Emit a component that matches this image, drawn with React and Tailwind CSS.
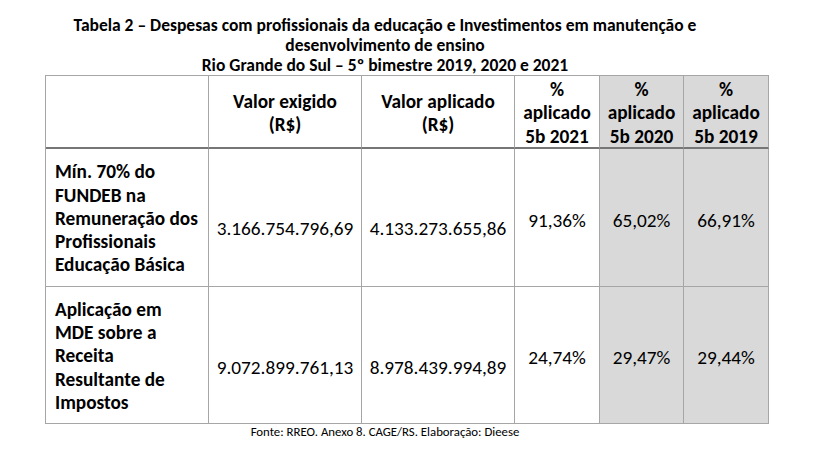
import React from "react";

const G = "bg-[#d9d9d9]";

function HeadCell({ children, gray }) {
  return (
    <div className={`flex items-center justify-center pt-[3px] text-center border-r border-b-2 border-r-[#a6a6a6] border-b-[#767676] font-bold ${gray ? G : ""}`}>
      <div>{children}</div>
    </div>
  );
}

function LabelCell({ lines }) {
  return (
    <div className="flex items-center pl-[9px] pt-[2px] border-r border-b border-[#a6a6a6] font-bold">
      <div>
        {lines.map((l) => (
          <div key={l} className="whitespace-nowrap">{l}</div>
        ))}
      </div>
    </div>
  );
}

function ValueCell({ children, low }) {
  return (
    <div className={`flex items-center justify-center border-r border-b border-[#a6a6a6] ${low ? "pt-[26px]" : "pt-[22px]"}`}>
      {children}
    </div>
  );
}

function PctCell({ children, gray }) {
  return (
    <div className={`flex items-center justify-center pt-[6px] border-r border-b border-[#a6a6a6] ${gray ? G : ""}`}>
      {children}
    </div>
  );
}

export default function App() {
  return (
    <div className="w-[818px] h-[458px] bg-white text-black font-['Carlito','Lato',sans-serif]">
      <div className="w-[770px] pt-[15px] text-center font-bold text-[17.5px] leading-[20px] whitespace-nowrap">
        <p>Tabela 2 – Despesas com profissionais da educação e Investimentos em manutenção e</p>
        <p>desenvolvimento de ensino</p>
        <p>Rio Grande do Sul – 5º bimestre 2019, 2020 e 2021</p>
      </div>
      <div className="ml-[45px] w-[724px] grid grid-cols-[163px_153px_153px_85px_84px_85px] grid-rows-[73px_138px_137px] border-t border-l border-[#a6a6a6] text-[19.3px] leading-[23.3px]">
        <HeadCell>{""}</HeadCell>
        <HeadCell>
          <div>Valor exigido</div>
          <div>(R$)</div>
        </HeadCell>
        <HeadCell>
          <div>Valor aplicado</div>
          <div>(R$)</div>
        </HeadCell>
        <HeadCell>
          <div>%</div>
          <div>aplicado</div>
          <div>5b 2021</div>
        </HeadCell>
        <HeadCell gray>
          <div>%</div>
          <div>aplicado</div>
          <div>5b 2020</div>
        </HeadCell>
        <HeadCell gray>
          <div>%</div>
          <div>aplicado</div>
          <div>5b 2019</div>
        </HeadCell>

        <LabelCell lines={["Mín. 70% do", "FUNDEB na", "Remuneração dos", "Profissionais", "Educação Básica"]} />
        <ValueCell>3.166.754.796,69</ValueCell>
        <ValueCell>4.133.273.655,86</ValueCell>
        <PctCell>91,36%</PctCell>
        <PctCell gray>65,02%</PctCell>
        <PctCell gray>66,91%</PctCell>

        <LabelCell lines={["Aplicação em", "MDE sobre a", "Receita", "Resultante de", "Impostos"]} />
        <ValueCell low>9.072.899.761,13</ValueCell>
        <ValueCell low>8.978.439.994,89</ValueCell>
        <PctCell>24,74%</PctCell>
        <PctCell gray>29,47%</PctCell>
        <PctCell gray>29,44%</PctCell>
      </div>
      <div className="w-[770px] text-center text-[12.8px] leading-[16px] whitespace-nowrap">
        Fonte: RREO. Anexo 8. CAGE/RS. Elaboração: Dieese
      </div>
    </div>
  );
}
